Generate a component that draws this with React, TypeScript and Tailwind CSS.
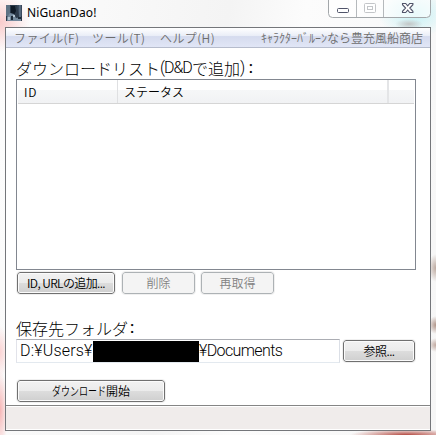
import type { ReactNode } from 'react';

// Win7 style push button with a 1px dialog-coloured rim.
function Button({ children, className = '', disabled = false }: { children: ReactNode; className?: string; disabled?: boolean }) {
  return (
    <button
      disabled={disabled}
      className={`box-content flex h-5 items-center justify-center rounded-[3px] border pb-px text-[12px] leading-none font-[350] whitespace-nowrap outline outline-[#f0f0f0] -mb-px ${
        disabled
          ? 'border-[#adb2b5] bg-[#f4f4f4] text-[#838383]'
          : 'border-[#707070] bg-[linear-gradient(#f2f2f2_0%,#ebebeb_50%,#dddddd_50%,#cfcfcf_100%)] text-black shadow-[inset_0_0_0_1px_#fbfbfb]'
      } ${className}`}
    >
      {children}
    </button>
  );
}

// A run of Latin characters set among full-width ones.
function Latin({ children, className = '' }: { children: ReactNode; className?: string }) {
  return <span className={`font-['Roboto',sans-serif] font-light whitespace-nowrap ${className}`}>{children}</span>;
}

function AppIcon() {
  return (
    <svg width="16" height="16" viewBox="0 0 16 16" className="shrink-0">
      <rect width="16" height="16" fill="#2c3a4a" />
      <path d="M0 0h4v9l-2 2H0z" fill="#5e7284" />
      <path d="M11 0h5v11h-3z" fill="#3b4a5e" />
      <path d="M13 0h2v12h-2z" fill="#56697d" />
      <path d="M5 1h4l1 5-2 4-3-2z" fill="#101a26" />
      <path d="M1 12l3-4 4 1 2 4 5-1v4H1z" fill="#74899c" />
      <path d="M2 12h2v3H2zM7 10h2v2H7z" fill="#b4c4d0" />
      <path d="M5 11h2v4H5zM12 12h3v2h-3z" fill="#1d2a38" />
    </svg>
  );
}

function CaptionButtons() {
  return (
    <svg width="104" height="19" viewBox="0 0 104 19" className="shrink-0">
      <path d="M.5 0v13.5q0 4 4 4h94q4 0 4-4V0" fill="#ffffffa0" stroke="#a3a7aa" />
      <path d="M28.500 0v17M55.500 0v17" stroke="#b5b9bc" />
      <rect x="9.500" y="8.500" width="11" height="4" rx="1" fill="#fff" stroke="#50546a" />
      <rect x="36.500" y="3.500" width="11" height="9" rx="1" fill="#fff" stroke="#c3c5c8" />
      <rect x="39.500" y="6.500" width="5" height="3" fill="#fff" stroke="#c3c5c8" />
      <path d="M74.500 3.500h3.200l2 2.300 2-2.300h3.200v1.200L81.800 8l3.100 3.300v1.200h-3.200l-2-2.300-2 2.300h-3.200v-1.200L77.600 8l-3.100-3.300z" fill="#fff" stroke="#50546a" strokeWidth="1.100" />
    </svg>
  );
}

export default function App() {
  return (
    <div className="h-[435px] w-[436px] overflow-hidden bg-[radial-gradient(circle_at_0px_22px,#f9cccc_0,#f9cccc00_30px),radial-gradient(ellipse_14px_5px_at_409px_24px,#c3c6c6_0,#c3c6c600_100%),radial-gradient(ellipse_36px_24px_at_414px_14px,#c4f1f5_0,#c4f1f500_100%),radial-gradient(ellipse_9px_26px_at_0px_352px,#fbd3d3_0,#fbd3d300_100%),radial-gradient(ellipse_8px_40px_at_0px_410px,#f6b5b5_0,#f6b5b500_100%),radial-gradient(ellipse_8px_14px_at_436px_268px,#bca99f_0,#bca99f00_100%),radial-gradient(ellipse_8px_9px_at_436px_325px,#b09488_0,#b0948800_100%),radial-gradient(ellipse_8px_7px_at_436px_345px,#c0a89f_0,#c0a89f00_100%),radial-gradient(ellipse_56px_6px_at_406px_435px,#b54b42_0,#b54b4200_100%),linear-gradient(100deg,#fdfdfd_0%,#f4f4f4_45%,#fcfcfc_60%,#f6f6f6_100%)] font-['Noto_Sans_CJK_JP',sans-serif]">
      <div className="flex h-[27px] items-start justify-between pr-1 pl-1.5">
        <div className="flex items-center pt-[5px]">
          <AppIcon />
          <span className="pl-[5px] font-['Noto_Sans',sans-serif] text-[12px] leading-4 tracking-[0.100px] whitespace-nowrap text-black">NiGuanDao!</span>
        </div>
        <CaptionButtons />
      </div>

      <div className="ml-[5px] flex h-[404px] w-[426px] flex-col border border-[#74767a] bg-white">
        <div className="flex h-5 shrink-0 items-center border-b border-[#b6bccc] bg-[linear-gradient(#ffffff_0%,#e9edf7_42%,#d5dbee_45%,#e1e6f6_100%)] pr-[7px] pl-2 text-[12px] leading-none font-[350] whitespace-nowrap text-[#6d6d6d]">
          <span className="w-[78px] tracking-[0.400px]">ファイル(F)</span>
          <span className="w-[68px] tracking-[0.400px]">ツール(T)</span>
          <span className="tracking-[0.400px]">ヘルプ(H)</span>
          <span className="ml-auto">ｷｬﾗｸﾀｰﾊﾞﾙｰﾝなら豊充風船商店</span>
        </div>

        <div className="flex flex-1 flex-col pl-[10px]">
          <div className="mt-[10px] mb-0.5 flex h-[19px] items-center text-[16px] leading-none font-light text-black">
            <span>ダウンロードリスト</span>
            <Latin className="w-8 tracking-[-1.100px]">(D&amp;D</Latin>
            <span>で追加</span>
            <Latin className="tracking-[1.500px]">)</Latin>
            <Latin className="pl-0.5 !font-medium">:</Latin>
          </div>

          <div className="h-[191px] w-[400px] border border-[#828790] bg-white p-px pt-0">
            <div className="flex h-6 items-center border-b border-[#d5d5d5] bg-[linear-gradient(#ffffff_0%,#ffffff_43%,#f6f7f8_43%,#f1f2f4_100%)] text-[12px] leading-none font-[350] text-black">
              <div className="flex h-full w-[100px] items-center border-r border-[#dfe0e2] pl-1.5 tracking-[0.800px]">ID</div>
              <div className="flex h-full w-[271px] items-center border-r-2 border-[#e4e5e7] pl-1.5">ステータス</div>
            </div>
          </div>

          <div className="mt-0.5 flex gap-[7px] pl-px">
            <Button className="h-[19px] w-[96px]"><span className="tracking-[-0.600px]">ID, URLの追加...</span></Button>
            <Button className="h-[19px] w-[71px]" disabled>削除</Button>
            <Button className="-ml-px h-[19px] w-[71px]" disabled>再取得</Button>
          </div>

          <div className="mt-[25px] mb-0.5 flex h-[19px] items-center text-[16px] leading-none font-light text-black">
            <span>保存先フォルダ</span>
            <Latin className="pl-0.5 !font-medium">:</Latin>
          </div>

          <div className="flex items-start">
            <div className="flex h-[24px] w-[324px] items-center border border-t-[#abadb3] border-r-[#dbdfe6] border-b-[#e3e9ef] border-l-[#e2e3ea] pl-[3px] text-[16px] leading-none text-black">
              <Latin className="w-[73px] tracking-[0.200px]">D:¥Users¥</Latin>
              <span className="h-[21px] w-[106px] bg-black" />
              <Latin className="tracking-[-0.600px]">¥Documents</Latin>
            </div>
            <div className="pt-px pl-[3px]">
              <Button className="h-[19px] w-[70px]"><span className="tracking-[-0.500px]">参照...</span></Button>
            </div>
          </div>

          <div className="mt-[17px] pl-px">
            <Button className="h-[19px] w-[146px]">
              <span className="inline-block w-[54px] text-left">
                <span className="inline-block origin-left scale-x-75">ダウンロード</span>
              </span>
              <span>開始</span>
            </Button>
          </div>
        </div>

        <div className="h-[25px] shrink-0 border-t border-[#858585] bg-white pt-px pb-px">
          <div className="h-[22px] bg-[#f0eceb]" />
        </div>
      </div>
    </div>
  );
}
